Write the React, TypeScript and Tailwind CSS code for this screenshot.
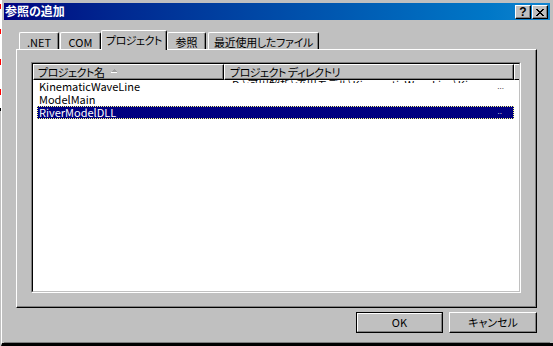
import React from "react";

const closeX = [
  "11....11",
  ".11..11.",
  "..1111..",
  "...11...",
  "..1111..",
  ".11..11.",
  "11....11",
];

function CloseGlyph() {
  const rects: React.ReactElement[] = [];
  closeX.forEach((row, y) =>
    row.split("").forEach((c, x) => {
      if (c === "1") rects.push(<rect key={`${x}-${y}`} x={x} y={y} width={1} height={1} fill="#000" />);
    })
  );
  return (
    <svg width="8" height="7" viewBox="0 0 8 7" shapeRendering="crispEdges">
      {rects}
    </svg>
  );
}

function CapButton({ children }: { children: React.ReactNode }) {
  return (
    <div className="w-[16px] h-[14px] bg-[#c0c0c0] border-t border-l border-t-white border-l-white border-r border-b border-r-black border-b-black shadow-[inset_-1px_-1px_0_#808080] flex items-center justify-center">
      {children}
    </div>
  );
}

function Tab({ label, w, selected, className = "" }: { label: string; w: string; selected?: boolean; className?: string }) {
  const base =
    "bg-[#c0c0c0] border-t border-l border-r border-t-white border-l-white border-r-black shadow-[inset_-1px_0_0_#808080] rounded-t-[2px] flex justify-center whitespace-nowrap ";
  return selected ? (
    <div className={base + "h-[20px] -mb-[1px] relative z-10 pt-[4px] " + w + " " + className}>{label}</div>
  ) : (
    <div className={base + "h-[17px] pt-[4px] " + w + " " + className}>{label}</div>
  );
}

export default function App() {
  return (
    <div className="w-[553px] h-[346px] bg-[#c0c0c0] flex overflow-hidden font-['Noto_Sans_CJK_JP',sans-serif] [font-feature-settings:'palt'] text-[11px] leading-none text-black">
      {/* desktop strip behind window */}
      <div className="w-[1px] shrink-0 flex flex-col bg-white">
        <div className="h-[4px]" />
        <div className="h-[5px] bg-[#ff0000]" />
        <div className="h-[20px]" />
        <div className="h-[5px] bg-[#ff0000]" />
        <div className="h-[25px]" />
        <div className="h-[6px] bg-[#ff0000]" />
        <div className="h-[24px]" />
        <div className="h-[6px] bg-[#ff0000]" />
        <div className="h-[13px]" />
        <div className="h-[3px] bg-black" />
        <div className="flex-1 bg-[#c0c0c0]" />
      </div>

      {/* window */}
      <div className="w-[552px] h-[346px] shrink-0 flex flex-col border-l border-l-white border-b-[3px] border-b-black pl-[2px] pr-[3px] pt-[3px]">
        {/* title bar */}
        <div className="h-[17px] shrink-0 flex items-start bg-linear-to-r from-[#000080] to-[#1084d0]">
          <span className="pl-[1px] pt-[2px] text-white font-bold text-[12px]">参照の追加</span>
          <div className="ml-auto mr-[2px] mt-[2px] flex gap-[1px]">
            <CapButton>
              <span className="font-['Liberation_Sans',sans-serif] font-bold text-[12px] leading-none -mt-[1px]">?</span>
            </CapButton>
            <CapButton>
              <CloseGlyph />
            </CapButton>
          </div>
        </div>

        {/* content */}
        <div className="flex-1 flex flex-col pl-[12px] pt-[10px]">
          {/* tab strip */}
          <div className="h-[19px] flex items-end pl-[3px] relative z-10">
            <Tab label=".NET" w="w-[40px]" />
            <Tab label="COM" w="w-[41px]" className="ml-[1px]" />
            <Tab label="プロジェクト" w="w-[66px]" selected className="tracking-[-0.5px]" />
            <Tab label="参照" w="w-[39px]" />
            <Tab label="最近使用したファイル" w="w-[111px]" className="ml-[2px] tracking-[-0.3px]" />
          </div>

          {/* tab panel */}
          <div className="w-[521px] h-[259px] shrink-0 border border-t-white border-l-white border-r-black border-b-black shadow-[inset_-1px_-1px_0_#808080] pl-[14px] pt-[12px]">
            <div className="w-[490px] h-[231px] border border-t-[#808080] border-l-[#808080] border-r-white border-b-white">
              <div className="w-full h-full bg-white border border-t-black border-l-black border-r-[#c0c0c0] border-b-[#c0c0c0] flex flex-col overflow-hidden">
                {/* header */}
                <div className="h-[16px] shrink-0 flex bg-[#c0c0c0]">
                  <div className="w-[191px] h-full flex items-center border-t border-l border-t-white border-l-white border-r border-b border-r-black border-b-black shadow-[inset_-1px_-1px_0_#808080] pl-[4px] whitespace-nowrap">
                    <span className="inline-block w-[73px] tracking-[-0.5px]">プロジェクト名</span>
                    <svg width="6" height="4" viewBox="0 0 6 4" shapeRendering="crispEdges" className="mb-[3px]">
                      <path d="M3 0 L6 3 L0 3 Z" fill="#a0a0a0" />
                      <rect x="0" y="3" width="6" height="1" fill="#ffffff" />
                    </svg>
                  </div>
                  <div className="w-[290px] h-full flex items-center border-t border-l border-t-white border-l-white border-r border-b border-r-black border-b-black shadow-[inset_-1px_-1px_0_#808080] pl-[5px] whitespace-nowrap tracking-[-0.5px]">
                    プロジェクト ディレクトリ
                  </div>
                  <div className="flex-1 h-full border-t border-l border-t-white border-l-white border-b border-b-black" />
                </div>

                {/* rows */}
                <div className="flex flex-col pl-[4px] w-[481px]">
                  <div className="h-[13px] flex">
                    <div className="w-[187px] pl-[2px] flex items-center whitespace-nowrap">KinematicWaveLine</div>
                    <div className="flex-1 flex items-start">
                      <div className="h-[3px] w-[262px] ml-[8px] overflow-hidden whitespace-nowrap">
                        <div className="-mt-[1px]">D:\河川解析\流出モデル\KinematicWaveLine\KinematicWaveLine</div>
                      </div>
                      <span className="ml-auto mr-[10px] self-end font-['Liberation_Sans',sans-serif] text-[8px] leading-none pb-[2px]">...</span>
                    </div>
                  </div>
                  <div className="h-[13px] flex items-center pl-[2px] whitespace-nowrap">ModelMain</div>
                  <div className="h-[13px] flex bg-[#000080] text-white outline outline-1 outline-dotted outline-[#ffff80] -outline-offset-1">
                    <div className="w-[187px] pl-[2px] flex items-center whitespace-nowrap">RiverModelDLL</div>
                    <div className="flex-1 flex items-end justify-end">
                      <span className="mr-[12px] font-['Liberation_Sans',sans-serif] text-[8px] leading-none pb-[3px]">..</span>
                    </div>
                  </div>
                </div>
              </div>
            </div>
          </div>

          {/* buttons */}
          <div className="w-[521px] mt-[4px] flex justify-end gap-[6px]">
            <div className="w-[87px] h-[21px] border border-black">
              <div className="w-full h-full border-t border-l border-t-white border-l-white border-r border-b border-r-[#808080] border-b-[#808080] flex items-center justify-center">
                OK
              </div>
            </div>
            <div className="w-[88px] h-[21px] border-t border-l border-t-white border-l-white border-r border-b border-r-black border-b-black shadow-[inset_-1px_-1px_0_#808080] flex items-center justify-center">
              キャンセル
            </div>
          </div>
        </div>
        <div className="h-[1px] bg-[#808080] shrink-0" />
      </div>
    </div>
  );
}
